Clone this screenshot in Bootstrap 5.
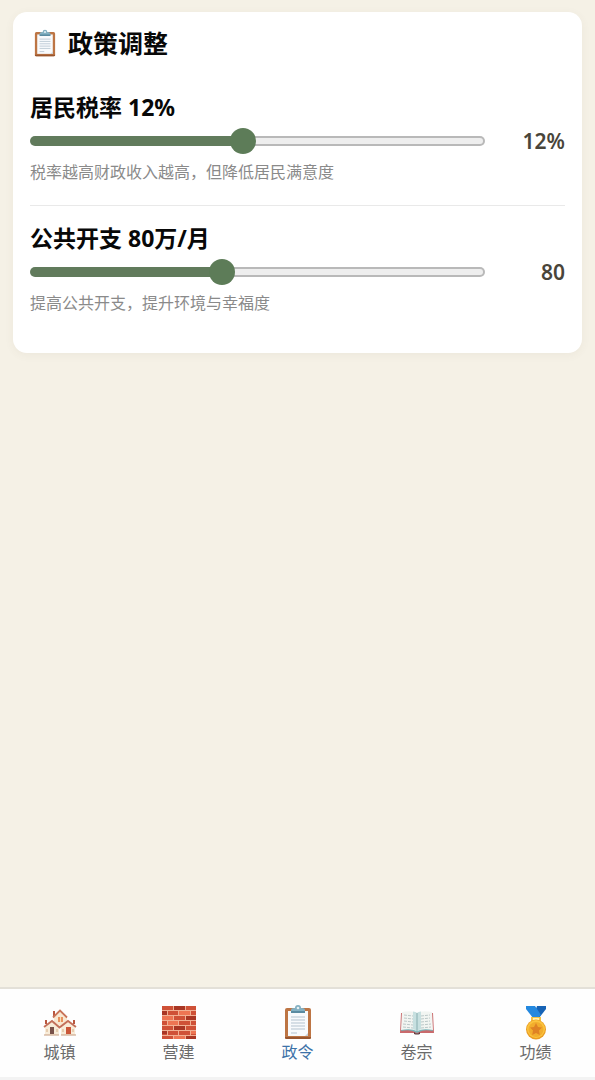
<!DOCTYPE html>
<html lang="zh-CN">
<head>
<meta charset="utf-8">
<meta name="viewport" content="width=device-width, initial-scale=1">
<title>政策调整</title>
<link href="https://cdn.jsdelivr.net/npm/bootstrap@5.3.0/dist/css/bootstrap.min.css" rel="stylesheet">
<style>
  body { background: #f5f1e6; color: #080808; font-family: "Noto Sans", "Noto Sans CJK SC", sans-serif; }
  .page-main { padding: 12px 13px; }
  .policy-card { border: 0; border-radius: 14px; padding: 16px 17px 17px; box-shadow: 0 2px 10px rgba(110, 80, 60, .06); }
  .policy-title { font-size: 25px; line-height: 30px; font-weight: 700; gap: 8px; margin-bottom: 17px; }
  .policy-title svg { width: 30px; height: 28px; }
  .policy-item { padding: 17px 0 21px; }
  .policy-item + .policy-item { border-top: 1px solid #e9e9e9; }
  .policy-label { display: block; font-size: 23px; line-height: 30px; font-weight: 700; margin-bottom: 6px; }
  .policy-value { width: 80px; font-size: 21px; line-height: 26px; font-weight: 600; color: #49453a; }
  .policy-hint { font-size: 16px; line-height: 24px; color: #8a8a8a; margin: 6px 0 0; }
  .policy-range { height: 26px; min-width: 0; }
  .policy-range::-webkit-slider-runnable-track {
    box-sizing: border-box; height: 10px; border: 2px solid transparent; border-radius: 5px;
    background:
      linear-gradient(#617b5c, #617b5c) 0 0 / var(--fill) 100% no-repeat border-box,
      linear-gradient(#eee, #eee) padding-box,
      linear-gradient(#b9b9b9, #b9b9b9) border-box;
  }
  .policy-range::-webkit-slider-thumb { width: 26px; height: 26px; margin-top: -10px; background: #5d7c58; }
  .policy-range::-webkit-slider-thumb:active { background: #4c6848; }
  .tab-bar { background: #fefefe; border-top: 2px solid #e3e0d8; border-bottom: 3px solid #f3f3f3; height: 93px; }
  .tab-bar a { flex: 1 1 0; padding-top: 15px; font-size: 16px; line-height: 24px; color: #6a6a6a; text-decoration: none; }
  .tab-bar a.active { color: #3d72a8; }
  .tab-bar svg { width: 36px; height: 36px; }
</style>
</head>
<body class="d-flex flex-column min-vh-100">
<svg width="0" height="0" class="position-absolute" aria-hidden="true">
  <symbol id="clipboard" viewBox="0 0 36 36">
    <rect x="5" y="4" width="26" height="31" rx="2" fill="#bd7544"/>
    <path d="M5 33h26v1q0 1-1.500 1h-23Q5 35 5 34z" fill="#99562f"/>
    <path d="M8 7h20v25H8z" fill="#f8fafc"/>
    <path d="M25 32l3-3v3z" fill="#c8d0d6"/>
    <path d="M11 13h14M11 16h14M11 19h14M11 22h14M11 25h14M11 29h6" stroke="#b4c3cf" stroke-width="1"/>
    <path d="M11 8V6q0-2 3-2h1q0-3 3-3t3 3h1q3 0 3 2v2z" fill="#83b0c2"/>
    <path d="M11 7h14v2H11z" fill="#5a8ba1"/>
    <circle cx="18" cy="4" r="1.300" fill="#e5f0f4"/>
  </symbol>
</svg>

<main class="page-main flex-grow-1">
  <section class="card policy-card">
    <h1 class="policy-title d-flex align-items-center"><svg aria-hidden="true"><use href="#clipboard"/></svg>政策调整</h1>
    <div class="policy-item">
      <label class="policy-label" for="tax">居民税率 12%</label>
      <div class="d-flex align-items-center">
        <input class="form-range policy-range flex-fill" type="range" id="tax" min="5" max="20" value="12" style="--fill:47%">
        <output class="policy-value flex-shrink-0 text-end" for="tax">12%</output>
      </div>
      <p class="policy-hint">税率越高财政收入越高，但降低居民满意度</p>
    </div>
    <div class="policy-item">
      <label class="policy-label" for="spending">公共开支 80万/月</label>
      <div class="d-flex align-items-center">
        <input class="form-range policy-range flex-fill" type="range" id="spending" min="30" max="150" value="80" style="--fill:42%">
        <output class="policy-value flex-shrink-0 text-end" for="spending">80</output>
      </div>
      <p class="policy-hint">提高公共开支，提升环境与幸福度</p>
    </div>
  </section>
</main>

<nav class="tab-bar d-flex sticky-bottom" aria-label="主导航">
  <a href="#town" class="d-flex flex-column align-items-center">
    <svg viewBox="0 0 36 36" aria-hidden="true">
      <path d="M11 7h2v5h-2z" fill="#b9573f"/>
      <path d="M12 13l6-6 7 6v9H12z" fill="#f8e8d2"/>
      <path d="M11 13.500l7-7 7 7" fill="none" stroke="#c97358" stroke-width="1.800"/>
      <path d="M16 13h5v5h-5z" fill="#e8925f"/><path d="M18.500 13v5" stroke="#f8dfb8"/>
      <path d="M3 16h2v4H3zM31 16h2v4h-2z" fill="#b9573f"/>
      <path d="M3 22l7-5 7 6v8H3zM19 23l7-6 7 5v9H19z" fill="#f8ecd9"/>
      <path d="M2 23l8-6 7.500 6.500L26 17l8 6" fill="none" stroke="#c3705a" stroke-width="1.800"/>
      <path d="M8 23h4v7H8z" fill="#785149"/><path d="M24 23h5v7h-5z" fill="#ca573a"/>
      <path d="M5 25v3M15 25v3M21 25v3M31 25v3" stroke="#d5af88"/>
      <path d="M2 31h15M19 31h15" stroke="#c49a7c"/>
    </svg>城镇</a>
  <a href="#build" class="d-flex flex-column align-items-center">
    <svg viewBox="0 0 36 36" aria-hidden="true">
      <path d="M1 2h34v33H1z" fill="#cf5137"/>
      <path d="M13 2h11v4H13zM24 12h11v4H24zM13 21h11v5H13zM24 31h11v4H24zM1 7h5v4H1zM1 26h6v4H1z" fill="#a93624"/>
      <path d="M18 7h11v4H18zM7 17h11v4H7zM29 26h6v4h-6zM1 12h11v4H1zM13 31h11v4H13z" fill="#ed7553"/>
      <path d="M1 6.500h34M1 11.500h34M1 16.500h34M1 21.500h34M1 26.500h34M1 31.500h34M12.500 2v4M24.500 2v4M6.500 7v4M17.500 7v4M29.500 7v4M12.500 12v4M24.500 12v4M6.500 17v4M17.500 17v4M29.500 17v4M12.500 22v4M24.500 22v4M6.500 27v4M17.500 27v4M29.500 27v4M12.500 32v3M24.500 32v3" stroke="#f1b093"/>
    </svg>营建</a>
  <a href="#policy" class="active d-flex flex-column align-items-center" aria-current="page">
    <svg aria-hidden="true"><use href="#clipboard"/></svg>政令</a>
  <a href="#records" class="d-flex flex-column align-items-center">
    <svg viewBox="0 0 36 36" aria-hidden="true">
      <path d="M2 9h32l1 20H20q-2 2-4 0H1z" fill="#c96a6c"/>
      <path d="M2 27q9-2 14 1l2 1 2-1q5-3 14-1l-1-2H3z" fill="#76b4b8"/>
      <path d="M3 8q10-2 15 1v18q-6-3-16-1zM33 8q-10-2-15 1v18q6-3 16-1z" fill="#f2f5f2"/>
      <path d="M14 7.500q3 0 4 1.500v18l-4-2zM22 7.500q-3 0-4 1.500v18l4-2z" fill="#c7e0e0"/>
      <path d="M5 11l9 1M5 14l9 1M5 17l9 1M4 20l10 1M4 23l10 1M22 12l9-1M22 15l9-1M22 18l9-1M22 21l10-1M22 24l10-1" stroke="#bcc8c8" stroke-dasharray="3 1"/>
      <path d="M18 9v19" stroke="#88aeb0"/><path d="M15 28q3 3 6 0v2q-3 1-6 0z" fill="#58393d"/>
    </svg>卷宗</a>
  <a href="#merits" class="d-flex flex-column align-items-center">
    <svg viewBox="0 0 36 36" aria-hidden="true">
      <path d="M19 2h9v3l-7 9h-6z" fill="#1763b5"/>
      <path d="M8 2h9l6 9-3 3h-5L8 5z" fill="#2388df"/>
      <path d="M13 13h10v4H13z" fill="#f3c244"/><path d="M15 14h6v2h-6z" fill="#fff0ad"/>
      <circle cx="18" cy="25.500" r="10" fill="#e99c24"/><circle cx="18" cy="25" r="9" fill="#fbc43e"/><circle cx="18" cy="25.500" r="7.500" fill="#f2ad2d"/>
      <path d="M18 19l2 4 4 .5-3 3 .8 4.500L18 29l-3.800 2 .8-4.500-3-3 4-.5z" fill="#df8224"/>
    </svg>功绩</a>
</nav>
<script src="https://cdn.jsdelivr.net/npm/bootstrap@5.3.0/dist/js/bootstrap.bundle.min.js"></script>
<script>
  const suffix = { tax: ["居民税率 ", "%", "%"], spending: ["公共开支 ", "万/月", ""] };
  document.querySelectorAll(".policy-range").forEach(range => {
    range.addEventListener("input", () => {
      const [name, unit, short] = suffix[range.id];
      range.style.setProperty("--fill", (range.value - range.min) / (range.max - range.min) * 100 + "%");
      range.labels[0].textContent = name + range.value + unit;
      range.nextElementSibling.textContent = range.value + short;
    });
  });
</script>
</body>
</html>
